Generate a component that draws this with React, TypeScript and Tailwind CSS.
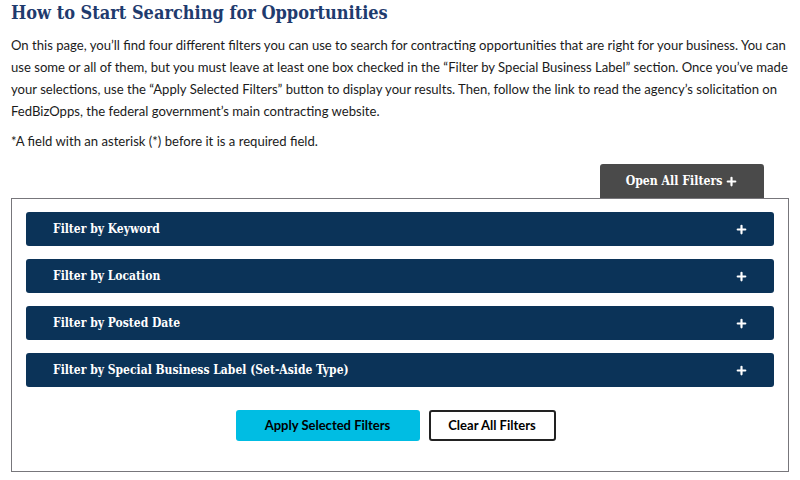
import { Plus } from "lucide-react";

const filters = [
  "Filter by Keyword",
  "Filter by Location",
  "Filter by Posted Date",
  "Filter by Special Business Label (Set-Aside Type)",
];

const serif = "font-['DejaVu_Serif_Condensed','DejaVu_Serif',serif]";

function FilterBar({ label }: { label: string }) {
  return (
    <button className="flex h-[34px] w-full items-center justify-between rounded-[3px] bg-[#0b3358] pl-[27px] pr-[26px] text-left text-white">
      <span className={`${serif} text-[12px] font-bold`}>{label}</span>
      <Plus size={13} strokeWidth={4} />
    </button>
  );
}

export default function App() {
  return (
    <div className="min-h-[480px] bg-white px-[11px] pt-[1px] text-[#1b1b1b]">
      <h1 className={`${serif} text-[18px] font-bold leading-[24px] text-[#1f3b6e]`}>
        How to Start Searching for Opportunities
      </h1>

      <div className="mt-[9px] font-['Lato',sans-serif] text-[13.1px] leading-[22px]">
        <p>
          On this page, you’ll find four different filters you can use to search for contracting
          opportunities that are right for your business. You can use some or all of them, but you
          must leave at least one box checked in the “Filter by Special Business Label” section. Once
          you’ve made your selections, use the “Apply Selected Filters” button to display your
          results. Then, follow the link to read the agency’s solicitation on FedBizOpps, the federal
          government’s main contracting website.
        </p>
        <p className="mt-[8px]">*A field with an asterisk (*) before it is a required field.</p>
      </div>

      <div className="mt-[12px] flex justify-end pr-[25px]">
        <button className="flex h-[34px] w-[164px] items-center justify-center gap-[3px] rounded-t-[3px] bg-[#4a4a4a] pt-[1px] text-white">
          <span className={`${serif} text-[12.2px] font-bold`}>Open All Filters</span>
          <Plus size={13} strokeWidth={4} />
        </button>
      </div>

      <div className="h-[274px] border border-[#77767b] px-[14px] pt-[13px]">
        <div className="flex flex-col gap-[13px]">
          {filters.map((f) => (
            <FilterBar key={f} label={f} />
          ))}
        </div>
        <div className="mt-[23px] flex justify-center gap-[9px] pr-[9px] font-['Lato',sans-serif] text-[13px] font-bold">
          <button className="h-[31px] w-[184px] rounded-[3px] bg-[#00bde3] text-black">
            Apply Selected Filters
          </button>
          <button className="h-[31px] w-[127px] rounded-[3px] border-2 border-[#222] bg-white text-black">
            Clear All Filters
          </button>
        </div>
      </div>
    </div>
  );
}
